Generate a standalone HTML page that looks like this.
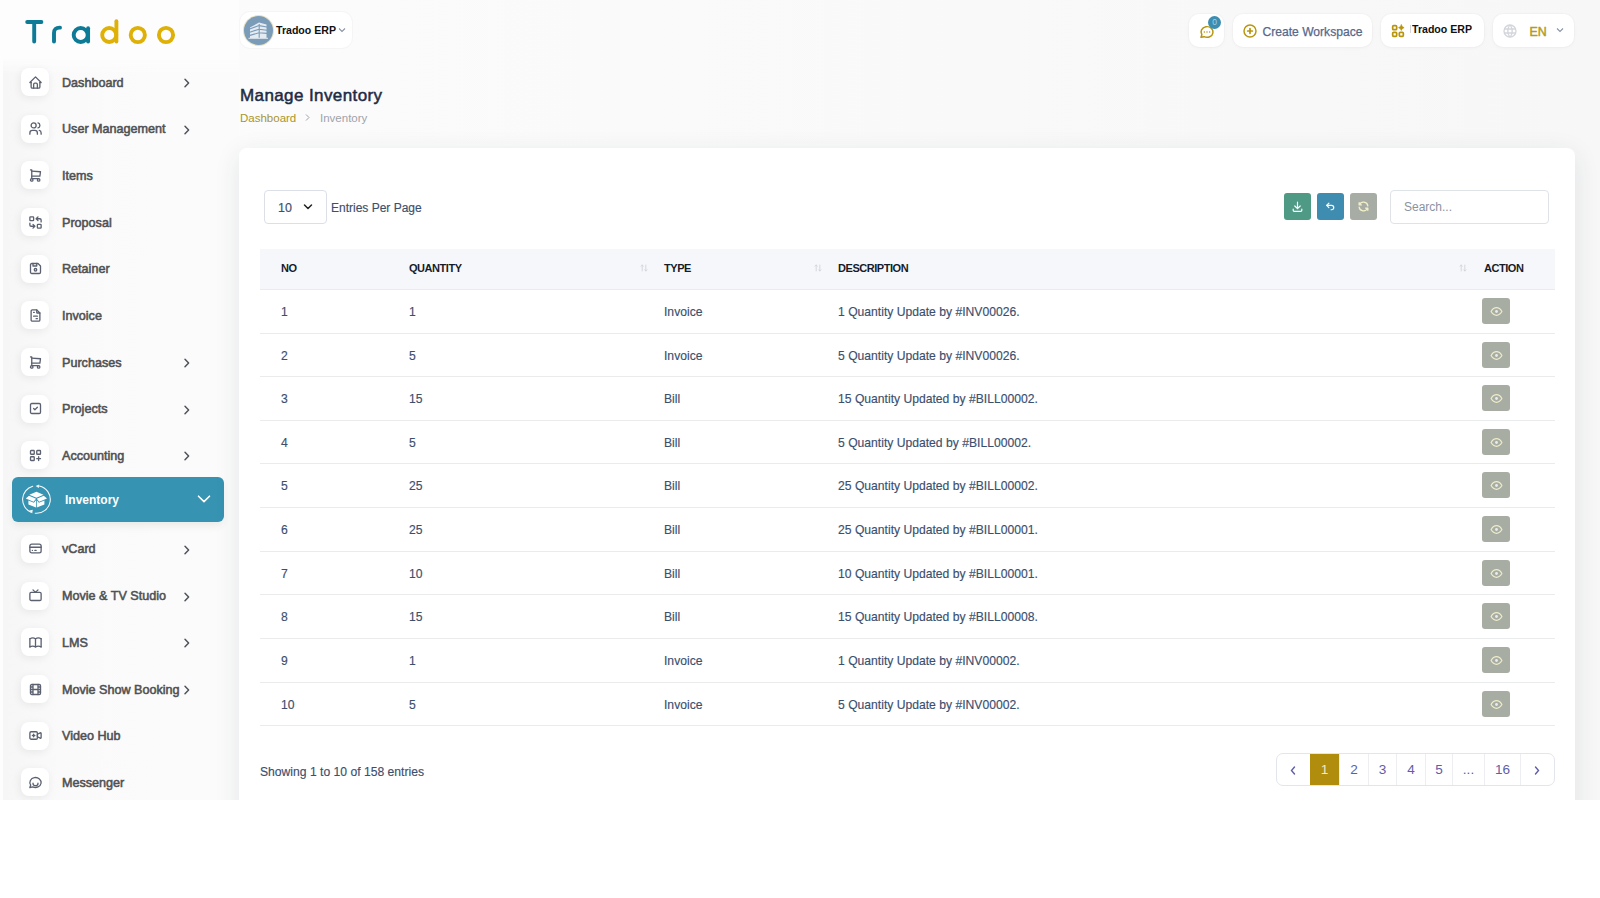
<!DOCTYPE html>
<html><head><meta charset="utf-8">
<style>
*{box-sizing:border-box;margin:0;padding:0}
html,body{width:1600px;height:898px;background:#fff;overflow:hidden;font-family:"Liberation Sans",sans-serif}
#page{position:absolute;left:0;top:0;width:1600px;height:800px;background:linear-gradient(90deg,#fcfcfc 0%,#fafafa 40%,#f7f7f7 100%);overflow:hidden}
#side{position:absolute;left:0;top:0;width:239px;height:800px;z-index:2;background:#fdfdfd}#navc{position:absolute;left:3px;top:58px;width:236px;height:742px;-webkit-mask-image:linear-gradient(180deg,transparent 0,#000 16px);background:linear-gradient(90deg,#f6f6f6 0%,#fafafa 25%,#fbfbfb 70%,#fbfbfb 100%)}
.logo{position:absolute;left:0;top:0}
.nav{position:absolute;left:0;width:239px;height:40px}
.nav .ib{position:absolute;left:21px;top:6px;width:28px;height:28px;border-radius:8px;background:#fff;box-shadow:-1px 2px 8px rgba(0,0,0,0.07)}
.nav .ib svg{position:absolute;left:6.5px;top:6.5px;width:15px;height:15px}
.nav .t{position:absolute;left:62px;top:13.6px;font-size:12.6px;font-weight:400;-webkit-text-stroke:0.55px #505154;color:#505154;white-space:nowrap;line-height:14px}
.nav .ch{position:absolute;left:181px;top:16px;width:10px;height:10px}
.act{position:absolute;left:12px;top:477px;width:212px;height:45px;border-radius:6px;background:#3693b1}
.act{box-shadow:0 5px 8px -2px rgba(60,60,40,0.10)}.act:before{content:"";position:absolute;left:7px;right:28px;bottom:-1.3px;height:6px;border-radius:0 0 8px 8px;background:#d2bb50;z-index:-1;filter:blur(0.5px)}
.act .t{position:absolute;left:53px;top:16px;font-size:12px;font-weight:700;color:#fff;line-height:14px}
.hb{position:absolute;background:#fff;border-radius:10px;box-shadow:0 0 0 1px rgba(0,0,0,0.015),0 1px 4px rgba(0,0,0,0.03)}
.card{position:absolute;left:239px;top:148px;width:1336px;height:700px;background:#fff;border-radius:8px;box-shadow:0 6px 26px rgba(30,50,70,0.10);z-index:3}
.th{position:absolute;top:100px;height:41px;font-size:11px;letter-spacing:-0.45px;font-weight:700;color:#161c2a;line-height:41px}
.row{position:absolute;left:21px;width:1295px;height:44px;border-bottom:1px solid #eaebed}
.row>div{position:absolute;top:1px;line-height:inherit;font-size:12.15px;color:#3b4f6e;-webkit-text-stroke:0.15px #3b4f6e;white-space:nowrap}
.row>div.eye{left:1222px;top:8px;width:28px;height:26px;border-radius:3px;background:#a8ada3;line-height:0}
.pg{position:absolute;top:0;height:32px;line-height:31px;text-align:center;font-size:13.6px;color:#5f5ea8;border-left:1px solid #eceef2}
.tb{position:absolute;top:45px;width:27px;height:27px;border-radius:3px}
.tb svg{position:absolute;left:7px;top:7px;width:13px;height:13px}
</style></head><body>
<div id="page">
<div id="side">
  <svg class="logo" width="239" height="60" viewBox="0 0 239 60">
    <g fill="none" stroke-width="3.9" stroke-linecap="round" stroke-linejoin="round">
      <g stroke="#0d7a96">
        <path d="M27.2 22H41.4M34.2 22V41.6"/>
        <path d="M54 41.6V33Q54 27.4 60 27.6"/>
        <circle cx="80.7" cy="35" r="7"/>
        <path d="M88.1 28.2V41.6"/>
      </g>
      <g stroke="#dfb106">
        <circle cx="109.2" cy="35" r="7"/>
        <path d="M116.4 21.2V41.6"/>
        <circle cx="137.8" cy="35" r="7.1"/>
        <circle cx="166" cy="35" r="7.1"/>
      </g>
    </g>
  </svg>
<div id="navc"></div>
<div class="nav" style="top:62px"><div class="ib" style="color:#5b6170"><svg viewBox="0 0 24 24" fill="none" stroke="currentColor" stroke-width="2.1" stroke-linecap="round" stroke-linejoin="round" ><path d="M5 12H3l9-9 9 9h-2"/><path d="M5 12v7a2 2 0 0 0 2 2h10a2 2 0 0 0 2-2v-7"/><path d="M9 21v-6a2 2 0 0 1 2-2h2a2 2 0 0 1 2 2v6"/></svg></div><div class="t">Dashboard</div><svg class="ch" viewBox="0 0 10 10" fill="none" stroke="#50545a" stroke-width="1.5" stroke-linecap="round" stroke-linejoin="round"><path d="M4 1.2L7.6 5 4 8.8"/></svg></div>
<div class="nav" style="top:108.5px"><div class="ib" style="color:#5b6170"><svg viewBox="0 0 24 24" fill="none" stroke="currentColor" stroke-width="2.1" stroke-linecap="round" stroke-linejoin="round" ><circle cx="9" cy="7" r="4"/><path d="M3 21v-2a4 4 0 0 1 4-4h4a4 4 0 0 1 4 4v2"/><path d="M16 3.13a4 4 0 0 1 0 7.75"/><path d="M21 21v-2a4 4 0 0 0-3-3.85"/></svg></div><div class="t">User Management</div><svg class="ch" viewBox="0 0 10 10" fill="none" stroke="#50545a" stroke-width="1.5" stroke-linecap="round" stroke-linejoin="round"><path d="M4 1.2L7.6 5 4 8.8"/></svg></div>
<div class="nav" style="top:155px"><div class="ib" style="color:#5b6170"><svg viewBox="0 0 24 24" fill="none" stroke="currentColor" stroke-width="2.1" stroke-linecap="round" stroke-linejoin="round" ><circle cx="6" cy="19" r="2"/><circle cx="17" cy="19" r="2"/><path d="M17 17H6V3H4"/><path d="M6 5l14 1-1 7H6"/></svg></div><div class="t">Items</div></div>
<div class="nav" style="top:202px"><div class="ib" style="color:#5b6170"><svg viewBox="0 0 24 24" fill="none" stroke="currentColor" stroke-width="2.1" stroke-linecap="round" stroke-linejoin="round" ><rect x="3" y="3" width="6" height="6" rx="1"/><rect x="15" y="15" width="6" height="6" rx="1"/><path d="M21 11V8a2 2 0 0 0-2-2h-6l3 3m0-6l-3 3"/><path d="M3 13v3a2 2 0 0 0 2 2h6l-3-3m0 6l3-3"/></svg></div><div class="t">Proposal</div></div>
<div class="nav" style="top:248.5px"><div class="ib" style="color:#5b6170"><svg viewBox="0 0 24 24" fill="none" stroke="currentColor" stroke-width="2.1" stroke-linecap="round" stroke-linejoin="round" ><path d="M6 4h10l4 4v10a2 2 0 0 1-2 2H6a2 2 0 0 1-2-2V6a2 2 0 0 1 2-2"/><circle cx="12" cy="14" r="2"/><path d="M14 4v4H8V4"/></svg></div><div class="t">Retainer</div></div>
<div class="nav" style="top:295px"><div class="ib" style="color:#5b6170"><svg viewBox="0 0 24 24" fill="none" stroke="currentColor" stroke-width="2.1" stroke-linecap="round" stroke-linejoin="round" ><path d="M14 3v4a1 1 0 0 0 1 1h4"/><path d="M17 21H7a2 2 0 0 1-2-2V5a2 2 0 0 1 2-2h7l5 5v11a2 2 0 0 1-2 2z"/><path d="M9 7h1M9 13h6M13 17h2"/></svg></div><div class="t">Invoice</div></div>
<div class="nav" style="top:342px"><div class="ib" style="color:#5b6170"><svg viewBox="0 0 24 24" fill="none" stroke="currentColor" stroke-width="2.1" stroke-linecap="round" stroke-linejoin="round" ><circle cx="6" cy="19" r="2"/><circle cx="17" cy="19" r="2"/><path d="M17 17H6V3H4"/><path d="M6 5l14 1-1 7H6"/></svg></div><div class="t">Purchases</div><svg class="ch" viewBox="0 0 10 10" fill="none" stroke="#50545a" stroke-width="1.5" stroke-linecap="round" stroke-linejoin="round"><path d="M4 1.2L7.6 5 4 8.8"/></svg></div>
<div class="nav" style="top:388.5px"><div class="ib" style="color:#5b6170"><svg viewBox="0 0 24 24" fill="none" stroke="currentColor" stroke-width="2.1" stroke-linecap="round" stroke-linejoin="round" ><rect x="4" y="4" width="16" height="16" rx="2"/><path d="M9 12l2 2 4-4"/></svg></div><div class="t">Projects</div><svg class="ch" viewBox="0 0 10 10" fill="none" stroke="#50545a" stroke-width="1.5" stroke-linecap="round" stroke-linejoin="round"><path d="M4 1.2L7.6 5 4 8.8"/></svg></div>
<div class="nav" style="top:435px"><div class="ib" style="color:#5b6170"><svg viewBox="0 0 24 24" fill="none" stroke="currentColor" stroke-width="2.1" stroke-linecap="round" stroke-linejoin="round" ><rect x="4" y="4" width="6" height="6" rx="1"/><rect x="14" y="4" width="6" height="6" rx="1"/><rect x="4" y="14" width="6" height="6" rx="1"/><path d="M14 17h6M17 14v6"/></svg></div><div class="t">Accounting</div><svg class="ch" viewBox="0 0 10 10" fill="none" stroke="#50545a" stroke-width="1.5" stroke-linecap="round" stroke-linejoin="round"><path d="M4 1.2L7.6 5 4 8.8"/></svg></div>
<div class="act"><svg style="position:absolute;left:9px;top:7px;width:31px;height:31px" viewBox="0 0 31 31" fill="none" stroke="#f4f8fa" stroke-linecap="round">
<path d="M11.7 2.2A13.8 13.8 0 0 0 10 28.2" stroke-width="1.1"/><path d="M18.3 2A13.8 13.8 0 0 1 14.2 29.25" stroke-width="1.1"/>
<path d="M11.2 29.6l-3-3.2 3.6-.6z" fill="#f4f8fa" stroke="none"/><path d="M14.6 2.1l3.6-1.7-.4 3.6z" fill="#f4f8fa" stroke="none"/>
<g fill="#fff" stroke="none"><path d="M15.4 7.8L22.5 10.8 15.4 13.8 8.3 10.8z"/><path d="M8 11.8L15 14.8 12.6 17.8 4.8 14.6z"/><path d="M22.8 11.8L15.8 14.8 18.2 17.8 26 14.6z"/><path d="M7.4 16.4L12.9 18.8 15 16.3V23.6L7.4 20.6z"/><path d="M23.4 16.4L17.9 18.8 15.8 16.3V23.6L23.4 20.6z"/></g></svg>
<div class="t">Inventory</div>
<svg style="position:absolute;left:185px;top:17px;width:14px;height:10px" viewBox="0 0 14 10" fill="none" stroke="#fff" stroke-width="1.6" stroke-linecap="round" stroke-linejoin="round"><path d="M1.5 2.2L7 7.6 12.5 2.2"/></svg></div>
<div class="nav" style="top:528.5px"><div class="ib" style="color:#5b6170"><svg viewBox="0 0 24 24" fill="none" stroke="currentColor" stroke-width="2.1" stroke-linecap="round" stroke-linejoin="round" ><rect x="3" y="5" width="18" height="14" rx="3"/><path d="M3 10h18M7 15h.01M11 15h2"/></svg></div><div class="t">vCard</div><svg class="ch" viewBox="0 0 10 10" fill="none" stroke="#50545a" stroke-width="1.5" stroke-linecap="round" stroke-linejoin="round"><path d="M4 1.2L7.6 5 4 8.8"/></svg></div>
<div class="nav" style="top:575.5px"><div class="ib" style="color:#5b6170"><svg viewBox="0 0 24 24" fill="none" stroke="currentColor" stroke-width="2.1" stroke-linecap="round" stroke-linejoin="round" ><rect x="3" y="7" width="18" height="13" rx="2"/><path d="M16 3l-4 4-4-4"/></svg></div><div class="t">Movie &amp; TV Studio</div><svg class="ch" viewBox="0 0 10 10" fill="none" stroke="#50545a" stroke-width="1.5" stroke-linecap="round" stroke-linejoin="round"><path d="M4 1.2L7.6 5 4 8.8"/></svg></div>
<div class="nav" style="top:622px"><div class="ib" style="color:#5b6170"><svg viewBox="0 0 24 24" fill="none" stroke="currentColor" stroke-width="2.1" stroke-linecap="round" stroke-linejoin="round" ><path d="M3 19a9 9 0 0 1 9 0 9 9 0 0 1 9 0"/><path d="M3 6a9 9 0 0 1 9 0 9 9 0 0 1 9 0"/><path d="M3 6v13M12 6v13M21 6v13"/></svg></div><div class="t">LMS</div><svg class="ch" viewBox="0 0 10 10" fill="none" stroke="#50545a" stroke-width="1.5" stroke-linecap="round" stroke-linejoin="round"><path d="M4 1.2L7.6 5 4 8.8"/></svg></div>
<div class="nav" style="top:669px"><div class="ib" style="color:#5b6170"><svg viewBox="0 0 24 24" fill="none" stroke="currentColor" stroke-width="2.1" stroke-linecap="round" stroke-linejoin="round" ><rect x="4" y="4" width="16" height="16" rx="2"/><path d="M8 4v16M16 4v16M4 8h4M4 16h4M4 12h16M16 8h4M16 16h4"/></svg></div><div class="t">Movie Show Booking</div><svg class="ch" viewBox="0 0 10 10" fill="none" stroke="#50545a" stroke-width="1.5" stroke-linecap="round" stroke-linejoin="round"><path d="M4 1.2L7.6 5 4 8.8"/></svg></div>
<div class="nav" style="top:715.5px"><div class="ib" style="color:#5b6170"><svg viewBox="0 0 24 24" fill="none" stroke="currentColor" stroke-width="2.1" stroke-linecap="round" stroke-linejoin="round" ><path d="M15 10l4.55-2.28A1 1 0 0 1 21 8.62v6.76a1 1 0 0 1-1.45.9L15 14v-4z"/><rect x="3" y="6" width="12" height="12" rx="2"/><path d="M7 12h4M9 10v4"/></svg></div><div class="t">Video Hub</div></div>
<div class="nav" style="top:762px"><div class="ib" style="color:#5b6170"><svg viewBox="0 0 24 24" fill="none" stroke="currentColor" stroke-width="2.1" stroke-linecap="round" stroke-linejoin="round" ><path d="M3 20l1.3-3.9A9 8 0 1 1 7.7 19L3 20"/><path d="M8 13a4 4 0 0 0 8 0"/></svg></div><div class="t">Messenger</div></div>
</div>

<!-- top header -->
<div class="hb" style="left:240px;top:12px;width:112px;height:36px;box-shadow:0 0 0 1px rgba(0,0,0,0.025)">
  <div style="position:absolute;left:4px;top:4px;width:29px;height:29px;border-radius:50%;background:#7b9cb9;box-shadow:0 0 0 1px #e9e3c0"></div>
  <svg style="position:absolute;left:4px;top:4px;width:29px;height:29px" viewBox="0 0 29 29"><path d="M6 11.5L15 6.5 22.5 8.5V22H6z" fill="#e4ebf1"/><g stroke="#7b9cb9" stroke-width="1.1"><path d="M5 13.2L15 9.6M5 16.4L15 13.2M5 19.6L15 16.8M15 9.6L23 11M15 13.2L23 14.2M15 16.8L23 17.4M15.2 8V22"/></g><path d="M4.5 22.3H24" stroke="#e4ebf1" stroke-width="1"/></svg>
  <div style="position:absolute;left:36px;top:10.5px;font-size:10.6px;font-weight:700;color:#111;line-height:14px">Tradoo ERP</div>
  <svg style="position:absolute;left:98px;top:15px;width:8px;height:6px" viewBox="0 0 8 6" fill="none" stroke="#8a94a6" stroke-width="1.1"><path d="M1 1.5l3 3 3-3"/></svg>
</div>

<div class="hb" style="left:1189px;top:14px;width:35px;height:32.5px">
  <svg style="position:absolute;left:10px;top:9.5px;width:16px;height:16px" viewBox="0 0 24 24" fill="none" stroke="#b8950e" stroke-width="2.2" stroke-linecap="round" stroke-linejoin="round"><path d="M3 20l1.3-3.9A9 8 0 1 1 7.7 19L3 20"/><path d="M8 12h.01M12 12h.01M16 12h.01"/></svg>
  <div style="position:absolute;left:19px;top:1.5px;width:13px;height:13px;border-radius:50%;background:#3c8db0;color:#a9cfe0;font-size:8.5px;line-height:13px;text-align:center">0</div>
</div>
<div class="hb" style="left:1233px;top:14px;width:139px;height:32.5px">
  <svg style="position:absolute;left:8.5px;top:9px;width:16px;height:16px" viewBox="0 0 24 24" fill="none" stroke="#b8950e" stroke-width="2.2" stroke-linecap="round"><circle cx="12" cy="12" r="9"/><path d="M8.5 12h7M12 8.5v7" stroke-width="2.6"/></svg>
  <div style="position:absolute;left:29.5px;top:10.5px;font-size:12.1px;color:#56688a;-webkit-text-stroke:0.25px #56688a;line-height:14px;white-space:nowrap">Create Workspace</div>
</div>
<div class="hb" style="left:1381px;top:14px;width:103px;height:32.5px;overflow:hidden">
  <svg style="position:absolute;left:9px;top:9px;width:16px;height:16px" viewBox="0 0 24 24" fill="none" stroke="#b8950e" stroke-width="2.6" stroke-linecap="round"><rect x="4" y="4" width="6" height="6" rx="1.5"/><rect x="4" y="14" width="6" height="6" rx="1.5"/><rect x="14" y="14" width="6" height="6" rx="1.5"/><path d="M17 2.8Q17.7 6.3 21.2 7 17.7 7.7 17 11.2 16.3 7.7 12.8 7 16.3 6.3 17 2.8z" fill="#b8950e" stroke-width="1"/></svg>
  <div style="position:absolute;left:28.5px;top:11px;width:1px;height:8px;background:#d5d5d5"></div><div style="position:absolute;left:31px;top:8px;width:61px;overflow:hidden;font-size:10.6px;font-weight:700;color:#111;line-height:14px;white-space:nowrap">Tradoo ERP</div>
</div>
<div class="hb" style="left:1493px;top:14px;width:81px;height:32.5px">
  <svg style="position:absolute;left:9px;top:8.5px;width:16px;height:16px" viewBox="0 0 24 24" fill="none" stroke="#d3d6db" stroke-width="2"><circle cx="12" cy="12" r="9"/><path d="M3.6 9h16.8M3.6 15h16.8M11.5 3a17 17 0 0 0 0 18M12.5 3a17 17 0 0 1 0 18"/></svg>
  <div style="position:absolute;left:36.5px;top:10.5px;font-size:12.4px;font-weight:400;-webkit-text-stroke:0.45px #b39a22;color:#b39a22;line-height:14px">EN</div>
  <svg style="position:absolute;left:63px;top:13px;width:8px;height:6px" viewBox="0 0 8 6" fill="none" stroke="#8a94a6" stroke-width="1.1"><path d="M1 1.5l3 3 3-3"/></svg>
</div>

<div style="position:absolute;left:240px;top:85.5px;font-size:17px;letter-spacing:0.4px;font-weight:400;-webkit-text-stroke:0.5px #1d2b46;color:#1d2b46;line-height:20px;white-space:nowrap">Manage Inventory</div>
<div style="position:absolute;left:240px;top:112px;font-size:11.5px;color:#a9952a;line-height:13px">Dashboard</div>
<svg style="position:absolute;left:304px;top:113px;width:7px;height:9px" viewBox="0 0 7 9" fill="none" stroke="#9aa1aa" stroke-width="1"><path d="M2 1.5l3 3-3 3"/></svg>
<div style="position:absolute;left:320px;top:112px;font-size:11.5px;color:#9ea3aa;line-height:13px">Inventory</div>

<div class="card">
  <div style="position:absolute;left:25px;top:42px;width:63px;height:34px;border:1px solid #dcdfe5;border-radius:4px"></div>
  <div style="position:absolute;left:39px;top:53px;font-size:12.5px;color:#3b4f6e;-webkit-text-stroke:0.15px #3b4f6e;line-height:14px">10</div>
  <svg style="position:absolute;left:64px;top:55px;width:10px;height:8px" viewBox="0 0 10 8" fill="none" stroke="#222" stroke-width="1.5" stroke-linecap="round" stroke-linejoin="round"><path d="M1.5 2l3.5 3.5L8.5 2"/></svg>
  <div style="position:absolute;left:92px;top:53px;font-size:12px;color:#3b4f6e;-webkit-text-stroke:0.15px #3b4f6e;line-height:14px;white-space:nowrap">Entries Per Page</div>

  <div class="tb" style="left:1045px;background:#4e9a85"><svg viewBox="0 0 24 24" fill="none" stroke="#fff" stroke-width="2.2" stroke-linecap="round" stroke-linejoin="round"><path d="M4 17v2a2 2 0 0 0 2 2h12a2 2 0 0 0 2-2v-2M7 11l5 5 5-5M12 4v12"/></svg></div>
  <div class="tb" style="left:1078px;background:#3e8cb0"><svg viewBox="0 0 24 24" fill="none" stroke="#fff" stroke-width="2.2" stroke-linecap="round" stroke-linejoin="round"><path d="M9 14L5 10l4-4"/><path d="M5 10h9a4 4 0 1 1 0 8h-1"/></svg></div>
  <div class="tb" style="left:1111px;background:#a7ada5"><svg viewBox="0 0 24 24" fill="none" stroke="#f3f0c8" stroke-width="2.4" stroke-linecap="round" stroke-linejoin="round"><path d="M20 11A8.1 8.1 0 0 0 4.5 9M4 5v4h4"/><path d="M4 13a8.1 8.1 0 0 0 15.5 2m.5 4v-4h-4"/></svg></div>
  <div style="position:absolute;left:1151px;top:42px;width:159px;height:34px;border:1px solid #dfe2e7;border-radius:4px"></div>
  <div style="position:absolute;left:1165px;top:52px;font-size:12px;color:#8a93a2;line-height:14px">Search...</div>

<div style="position:absolute;left:21px;top:101px;width:1295px;height:41px;background:#f6f7fb;border-bottom:1px solid #eaebed"></div>
<div class="th" style="left:42px">NO</div>
<div class="th" style="left:170px">QUANTITY</div>
<div class="th" style="left:425px">TYPE</div>
<div class="th" style="left:599px">DESCRIPTION</div>
<div class="th" style="left:1245px">ACTION</div>
<svg style="position:absolute;left:401px;top:116px;width:8px;height:8px" viewBox="0 0 8 8" fill="none" stroke="#ced1d6" stroke-width="0.8" stroke-linecap="round"><path d="M2.2 7V1M1 2.2L2.2 1 3.4 2.2M5.8 1V7M4.6 5.8L5.8 7 7 5.8"/></svg>
<svg style="position:absolute;left:575px;top:116px;width:8px;height:8px" viewBox="0 0 8 8" fill="none" stroke="#ced1d6" stroke-width="0.8" stroke-linecap="round"><path d="M2.2 7V1M1 2.2L2.2 1 3.4 2.2M5.8 1V7M4.6 5.8L5.8 7 7 5.8"/></svg>
<svg style="position:absolute;left:1220px;top:116px;width:8px;height:8px" viewBox="0 0 8 8" fill="none" stroke="#ced1d6" stroke-width="0.8" stroke-linecap="round"><path d="M2.2 7V1M1 2.2L2.2 1 3.4 2.2M5.8 1V7M4.6 5.8L5.8 7 7 5.8"/></svg>
<div class="row" style="top:142px;height:44px;line-height:43px"><div style="left:21px">1</div><div style="left:149px">1</div><div style="left:404px">Invoice</div><div style="left:578px">1 Quantity Update by #INV00026.</div><div class="eye"><svg style="position:absolute;left:7.5px;top:6.5px;width:13px;height:13px" viewBox="0 0 24 24" fill="none" stroke="#eeeccc" stroke-width="2.2" stroke-linecap="round" stroke-linejoin="round"><circle cx="12" cy="12" r="2.6" fill="#e8ecef" stroke="none"/><path d="M22 12c-2.67 4.67-6 7-10 7s-7.33-2.33-10-7c2.67-4.67 6-7 10-7s7.33 2.33 10 7"/></svg></div></div>
<div class="row" style="top:186px;height:43px;line-height:42px"><div style="left:21px">2</div><div style="left:149px">5</div><div style="left:404px">Invoice</div><div style="left:578px">5 Quantity Update by #INV00026.</div><div class="eye"><svg style="position:absolute;left:7.5px;top:6.5px;width:13px;height:13px" viewBox="0 0 24 24" fill="none" stroke="#eeeccc" stroke-width="2.2" stroke-linecap="round" stroke-linejoin="round"><circle cx="12" cy="12" r="2.6" fill="#e8ecef" stroke="none"/><path d="M22 12c-2.67 4.67-6 7-10 7s-7.33-2.33-10-7c2.67-4.67 6-7 10-7s7.33 2.33 10 7"/></svg></div></div>
<div class="row" style="top:229px;height:44px;line-height:43px"><div style="left:21px">3</div><div style="left:149px">15</div><div style="left:404px">Bill</div><div style="left:578px">15 Quantity Updated by #BILL00002.</div><div class="eye"><svg style="position:absolute;left:7.5px;top:6.5px;width:13px;height:13px" viewBox="0 0 24 24" fill="none" stroke="#eeeccc" stroke-width="2.2" stroke-linecap="round" stroke-linejoin="round"><circle cx="12" cy="12" r="2.6" fill="#e8ecef" stroke="none"/><path d="M22 12c-2.67 4.67-6 7-10 7s-7.33-2.33-10-7c2.67-4.67 6-7 10-7s7.33 2.33 10 7"/></svg></div></div>
<div class="row" style="top:273px;height:43px;line-height:42px"><div style="left:21px">4</div><div style="left:149px">5</div><div style="left:404px">Bill</div><div style="left:578px">5 Quantity Updated by #BILL00002.</div><div class="eye"><svg style="position:absolute;left:7.5px;top:6.5px;width:13px;height:13px" viewBox="0 0 24 24" fill="none" stroke="#eeeccc" stroke-width="2.2" stroke-linecap="round" stroke-linejoin="round"><circle cx="12" cy="12" r="2.6" fill="#e8ecef" stroke="none"/><path d="M22 12c-2.67 4.67-6 7-10 7s-7.33-2.33-10-7c2.67-4.67 6-7 10-7s7.33 2.33 10 7"/></svg></div></div>
<div class="row" style="top:316px;height:44px;line-height:43px"><div style="left:21px">5</div><div style="left:149px">25</div><div style="left:404px">Bill</div><div style="left:578px">25 Quantity Updated by #BILL00002.</div><div class="eye"><svg style="position:absolute;left:7.5px;top:6.5px;width:13px;height:13px" viewBox="0 0 24 24" fill="none" stroke="#eeeccc" stroke-width="2.2" stroke-linecap="round" stroke-linejoin="round"><circle cx="12" cy="12" r="2.6" fill="#e8ecef" stroke="none"/><path d="M22 12c-2.67 4.67-6 7-10 7s-7.33-2.33-10-7c2.67-4.67 6-7 10-7s7.33 2.33 10 7"/></svg></div></div>
<div class="row" style="top:360px;height:44px;line-height:43px"><div style="left:21px">6</div><div style="left:149px">25</div><div style="left:404px">Bill</div><div style="left:578px">25 Quantity Updated by #BILL00001.</div><div class="eye"><svg style="position:absolute;left:7.5px;top:6.5px;width:13px;height:13px" viewBox="0 0 24 24" fill="none" stroke="#eeeccc" stroke-width="2.2" stroke-linecap="round" stroke-linejoin="round"><circle cx="12" cy="12" r="2.6" fill="#e8ecef" stroke="none"/><path d="M22 12c-2.67 4.67-6 7-10 7s-7.33-2.33-10-7c2.67-4.67 6-7 10-7s7.33 2.33 10 7"/></svg></div></div>
<div class="row" style="top:404px;height:43px;line-height:42px"><div style="left:21px">7</div><div style="left:149px">10</div><div style="left:404px">Bill</div><div style="left:578px">10 Quantity Updated by #BILL00001.</div><div class="eye"><svg style="position:absolute;left:7.5px;top:6.5px;width:13px;height:13px" viewBox="0 0 24 24" fill="none" stroke="#eeeccc" stroke-width="2.2" stroke-linecap="round" stroke-linejoin="round"><circle cx="12" cy="12" r="2.6" fill="#e8ecef" stroke="none"/><path d="M22 12c-2.67 4.67-6 7-10 7s-7.33-2.33-10-7c2.67-4.67 6-7 10-7s7.33 2.33 10 7"/></svg></div></div>
<div class="row" style="top:447px;height:44px;line-height:43px"><div style="left:21px">8</div><div style="left:149px">15</div><div style="left:404px">Bill</div><div style="left:578px">15 Quantity Updated by #BILL00008.</div><div class="eye"><svg style="position:absolute;left:7.5px;top:6.5px;width:13px;height:13px" viewBox="0 0 24 24" fill="none" stroke="#eeeccc" stroke-width="2.2" stroke-linecap="round" stroke-linejoin="round"><circle cx="12" cy="12" r="2.6" fill="#e8ecef" stroke="none"/><path d="M22 12c-2.67 4.67-6 7-10 7s-7.33-2.33-10-7c2.67-4.67 6-7 10-7s7.33 2.33 10 7"/></svg></div></div>
<div class="row" style="top:491px;height:44px;line-height:43px"><div style="left:21px">9</div><div style="left:149px">1</div><div style="left:404px">Invoice</div><div style="left:578px">1 Quantity Update by #INV00002.</div><div class="eye"><svg style="position:absolute;left:7.5px;top:6.5px;width:13px;height:13px" viewBox="0 0 24 24" fill="none" stroke="#eeeccc" stroke-width="2.2" stroke-linecap="round" stroke-linejoin="round"><circle cx="12" cy="12" r="2.6" fill="#e8ecef" stroke="none"/><path d="M22 12c-2.67 4.67-6 7-10 7s-7.33-2.33-10-7c2.67-4.67 6-7 10-7s7.33 2.33 10 7"/></svg></div></div>
<div class="row" style="top:535px;height:43px;line-height:42px"><div style="left:21px">10</div><div style="left:149px">5</div><div style="left:404px">Invoice</div><div style="left:578px">5 Quantity Update by #INV00002.</div><div class="eye"><svg style="position:absolute;left:7.5px;top:6.5px;width:13px;height:13px" viewBox="0 0 24 24" fill="none" stroke="#eeeccc" stroke-width="2.2" stroke-linecap="round" stroke-linejoin="round"><circle cx="12" cy="12" r="2.6" fill="#e8ecef" stroke="none"/><path d="M22 12c-2.67 4.67-6 7-10 7s-7.33-2.33-10-7c2.67-4.67 6-7 10-7s7.33 2.33 10 7"/></svg></div></div>

  <div style="position:absolute;left:21px;top:616.5px;font-size:12.15px;color:#3b4f6e;-webkit-text-stroke:0.15px #3b4f6e;line-height:14px;white-space:nowrap">Showing 1 to 10 of 158 entries</div>
  <div style="position:absolute;left:1037px;top:605px;width:279px;height:33px;border:1px solid #e3e5ec;border-radius:7px;overflow:hidden">
    <div class="pg" style="left:0;width:33px;border-left:none"><svg style="position:absolute;left:13px;top:12px;width:6px;height:9px" viewBox="0 0 6 9" fill="none" stroke="#5f5ea8" stroke-width="1.4" stroke-linecap="round"><path d="M4.5 1L1.5 4.5 4.5 8"/></svg></div>
    <div class="pg" style="left:33px;width:29px;background:#b08d0d;color:#f0e9c8;border-left:none">1</div>
    <div class="pg" style="left:62px;width:29px">2</div>
    <div class="pg" style="left:91px;width:28px">3</div>
    <div class="pg" style="left:119px;width:29px">4</div>
    <div class="pg" style="left:148px;width:27px">5</div>
    <div class="pg" style="left:175px;width:32px">...</div>
    <div class="pg" style="left:207px;width:36px">16</div>
    <div class="pg" style="left:243px;width:36px"><svg style="position:absolute;left:13px;top:12px;width:6px;height:9px" viewBox="0 0 6 9" fill="none" stroke="#5f5ea8" stroke-width="1.4" stroke-linecap="round"><path d="M1.5 1L4.5 4.5 1.5 8"/></svg></div>
  </div>
</div>
</div>
</body></html>
